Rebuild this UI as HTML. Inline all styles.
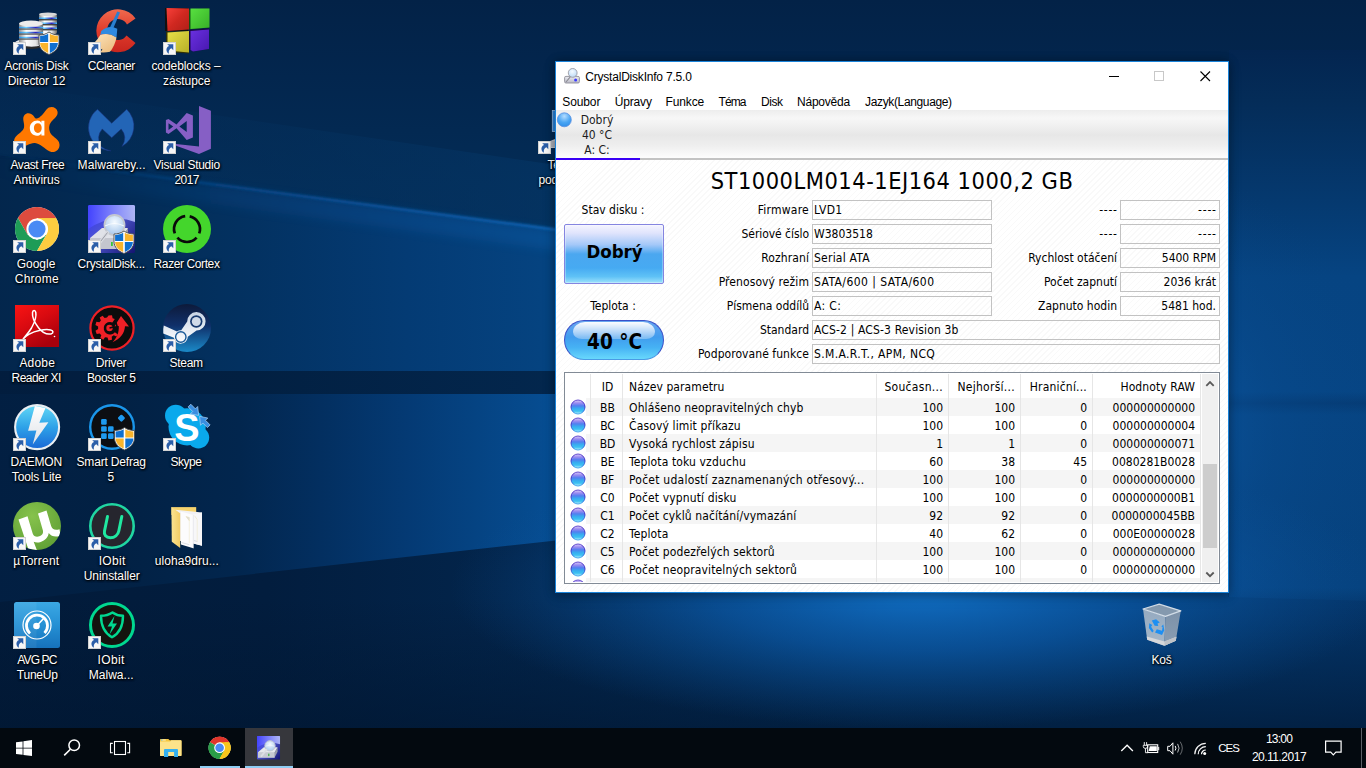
<!DOCTYPE html>
<html lang="cs">
<head>
<meta charset="utf-8">
<title>CrystalDiskInfo 7.5.0</title>
<style>
*{box-sizing:border-box;margin:0;padding:0}
html,body{width:1366px;height:768px;overflow:hidden;background:#03264a}
body{position:relative;font-family:"Liberation Sans",sans-serif;font-size:12px;color:#000}
.abs{position:absolute}
/* ---------- wallpaper ---------- */
#wall{position:absolute;left:0;top:0;width:1366px;height:768px;overflow:hidden;background:#05305f}
#wall svg{position:absolute;left:0;top:0}
/* ---------- desktop icons ---------- */
.ico{position:absolute;width:75px;height:99px}
.ico svg.pic{position:absolute;left:13px;top:6px;width:48px;height:48px;overflow:visible}
.ico .lbl{position:absolute;left:-7px;width:87px;top:58px;text-align:center;color:#fff;font-size:12px;line-height:15px;letter-spacing:-0.2px;
 text-shadow:0 1px 2px rgba(0,0,0,.95),1px 1px 2px rgba(0,0,0,.85),0 0 3px rgba(0,0,0,.6)}
.lb{position:absolute;white-space:nowrap;color:#fff;font-size:12px;line-height:15px;text-shadow:0 1px 2px rgba(0,0,0,.95),1px 1px 2px rgba(0,0,0,.85),0 0 3px rgba(0,0,0,.6)}
.ico .sc{position:absolute;left:13px;top:41px;width:13px;height:13px;background:#f7f7f7;border:1px solid #d2d2d2}
.ico .sc svg{position:absolute;left:0;top:0;width:11px;height:11px}
/* ---------- taskbar ---------- */
#tb{position:absolute;left:0;top:728px;width:1366px;height:40px;background:#03090f}
#tb .t{position:absolute;color:#fff;font-size:12px;letter-spacing:-0.3px;white-space:nowrap}
/* ---------- window ---------- */
#win{position:absolute;left:555px;top:61px;width:674px;height:532px;border:1px solid #1a83d9;background:#fff;box-shadow:0 0 9px rgba(0,0,0,.28),0 3px 12px rgba(0,0,0,.2);overflow:hidden}
#win .ttl{position:absolute;left:29.3px;top:7px;font-size:12px;letter-spacing:-0.21px;white-space:nowrap;line-height:16px}
.menu{position:absolute;top:32px;font-size:12px;letter-spacing:-0.3px;white-space:nowrap;line-height:16px}
#strip{z-index:2;position:absolute;left:0;top:48px;width:672px;height:50px;background:linear-gradient(#ededed 0,#f7f7f7 8px,#f2f2f2 14px,#e7e7e7 25px,#efefef 36px,#fdfdfd 48px,#c3c3c3 48px,#c3c3c3 50px)}
#main{position:absolute;left:0;top:97px;width:672px;height:433px;background:#fff repeating-linear-gradient(135deg,#fff 0,#fff 3.2px,#f9f9f9 3.2px,#f9f9f9 4.2px)}
.dj{font-family:"DejaVu Sans Condensed","DejaVu Sans","Liberation Sans",sans-serif;font-stretch:condensed;font-size:12px;white-space:nowrap;line-height:16px}
.lab{position:absolute;text-align:right}
.box{position:absolute;height:20px;border:1px solid #c2c2c2;padding:1px 2px 0 1px}
.box.r{text-align:right;padding-right:3px}
</style>
</head>
<body>
<div id="wall"><svg width="1366" height="768" viewBox="0 0 1366 768">
<defs>
<linearGradient id="wbase" x1="0" y1="0" x2="0" y2="1">
<stop offset="0" stop-color="#032247"/><stop offset=".1" stop-color="#03264e"/><stop offset=".24" stop-color="#032c56"/><stop offset=".5" stop-color="#04305c"/><stop offset=".72" stop-color="#032a52"/><stop offset=".82" stop-color="#022246"/><stop offset="1" stop-color="#021c3c"/>
</linearGradient>
<radialGradient id="wglow" cx="900" cy="430" r="520" gradientUnits="userSpaceOnUse" gradientTransform="translate(900 430) scale(1 .62) translate(-900 -430)">
<stop offset="0" stop-color="#1a7ad0" stop-opacity=".95"/><stop offset=".5" stop-color="#0f62b2" stop-opacity=".7"/><stop offset=".72" stop-color="#0a4f96" stop-opacity=".3"/><stop offset="1" stop-color="#08427f" stop-opacity="0"/>
</radialGradient>
<linearGradient id="bmA" x1="0" y1="0" x2="1" y2="0"><stop offset="0" stop-color="#03264c"/><stop offset=".22" stop-color="#032b55"/><stop offset=".43" stop-color="#033160"/><stop offset=".72" stop-color="#043b74"/><stop offset=".95" stop-color="#054380"/><stop offset="1" stop-color="#054682"/></linearGradient>
<linearGradient id="bmB" x1="0" y1="0" x2="1" y2="0"><stop offset="0" stop-color="#04305c" stop-opacity=".1"/><stop offset=".4" stop-color="#04305c" stop-opacity=".35"/><stop offset="1" stop-color="#053768" stop-opacity=".6"/></linearGradient>
<linearGradient id="bmC" x1="0" y1="0" x2="1" y2="0"><stop offset="0" stop-color="#021f42"/><stop offset=".22" stop-color="#022144"/><stop offset=".43" stop-color="#02264e"/><stop offset=".57" stop-color="#032f60"/><stop offset=".72" stop-color="#043a74"/><stop offset=".95" stop-color="#064c90"/><stop offset="1" stop-color="#0754a0"/></linearGradient>
<linearGradient id="edge" x1="0" y1="0" x2="1" y2="0"><stop offset="0" stop-color="#05386c" stop-opacity="0"/><stop offset=".4" stop-color="#0a4f96" stop-opacity=".7"/><stop offset="1" stop-color="#1264b4"/></linearGradient>
<linearGradient id="low1" x1="0" y1="0" x2="1" y2="0"><stop offset="0" stop-color="#021b3a"/><stop offset=".2" stop-color="#021d3e"/><stop offset=".42" stop-color="#03274f"/><stop offset=".65" stop-color="#043464"/><stop offset=".9" stop-color="#04386e"/><stop offset="1" stop-color="#04356a"/></linearGradient>
<linearGradient id="lowfade" x1="0" y1="0" x2="0" y2="1"><stop offset="0" stop-color="#011732" stop-opacity="0"/><stop offset="1" stop-color="#011732" stop-opacity=".7"/></linearGradient>
<linearGradient id="rt2" x1="0" y1="0" x2="0" y2="768" gradientUnits="userSpaceOnUse"><stop offset="0" stop-color="#032247"/><stop offset=".065" stop-color="#032550"/><stop offset=".13" stop-color="#042c58"/><stop offset=".26" stop-color="#05396f"/><stop offset=".36" stop-color="#064482"/><stop offset=".51" stop-color="#064584"/><stop offset=".525" stop-color="#053b74"/><stop offset=".54" stop-color="#064482"/><stop offset=".765" stop-color="#06427e"/><stop offset=".79" stop-color="#04376c"/><stop offset="1" stop-color="#032a52"/></linearGradient>
<linearGradient id="bot" x1="0" y1="0" x2="0" y2="1"><stop offset="0" stop-color="#043160"/><stop offset=".35" stop-color="#032b54"/><stop offset="1" stop-color="#02244a"/></linearGradient>
<radialGradient id="g2" cx="920" cy="588" r="470" gradientUnits="userSpaceOnUse" gradientTransform="translate(920 588) scale(1 .3) translate(-920 -588)"><stop offset="0" stop-color="#1274cc" stop-opacity=".95"/><stop offset=".45" stop-color="#0c5eb0" stop-opacity=".65"/><stop offset="1" stop-color="#0a4f96" stop-opacity="0"/></radialGradient>
<linearGradient id="dkb" x1="0" y1="0" x2="1" y2="0"><stop offset="0" stop-color="#021d3e"/><stop offset=".45" stop-color="#022042"/><stop offset="1" stop-color="#03274e"/></linearGradient>
<filter id="bl5" x="-5%" y="-30%" width="110%" height="160%"><feGaussianBlur stdDeviation="5"/></filter>
<filter id="bl1" x="-5%" y="-5%" width="110%" height="110%"><feGaussianBlur stdDeviation=".8"/></filter>
</defs>
<rect width="1366" height="768" fill="url(#wbase)"/>
<rect x="1229" y="50" width="137" height="718" fill="url(#rt2)"/>
<rect x="560" width="806" height="768" fill="url(#wglow)"/>
<!-- faint upper ray -->
<polygon points="-10,82 570,167 570,232 -10,152" fill="url(#bmB)"/>
<!-- main beam -->
<polygon points="-10,154 570,231 570,372 -10,372" fill="url(#bmA)"/>
<polygon points="-10,156 570,233 570,252 -10,175" fill="url(#edge)" opacity=".32" filter="url(#bl5)"/>
<polygon points="-10,153 570,230 570,233 -10,156" fill="url(#edge)" opacity=".9" filter="url(#bl1)"/>
<!-- dark horizon band -->
<rect x="-10" y="371" width="580" height="23" fill="url(#dkb)"/>
<rect x="-10" y="394" width="580" height="210" fill="url(#bmC)"/>
<!-- lower dark wedge -->
<polygon points="-10,603 570,539 1228,539 1228,597 1376,601 1376,780 -10,780" fill="url(#low1)"/>
<rect x="-10" y="600" width="1386" height="130" fill="url(#lowfade)"/>
<!-- bottom under the window -->
<rect x="400" y="450" width="966" height="280" fill="url(#g2)"/>
</svg>
</div>
<div id="icons"><div class="ico" style="left:0px;top:1px"><svg class="pic" viewBox="0 0 48 48"><defs><linearGradient id="acD" x1="0" y1="0" x2="1" y2="0"><stop offset="0" stop-color="#8a8a8a"/><stop offset=".3" stop-color="#fdfdfd"/><stop offset=".7" stop-color="#e4e4e4"/><stop offset="1" stop-color="#6e6e6e"/></linearGradient><linearGradient id="acB" x1="0" y1="0" x2="1" y2="0"><stop offset="0" stop-color="#2a8ae0"/><stop offset=".3" stop-color="#6ad0ff"/><stop offset=".7" stop-color="#2a20c0"/><stop offset="1" stop-color="#48c0f8"/></linearGradient></defs>
<ellipse cx="19" cy="36" rx="17" ry="4.500" fill="#e8eaee"/>
<g><rect x="26" y="7" width="18" height="20" rx="2" fill="url(#acD)"/><ellipse cx="35" cy="7.200" rx="9" ry="1.800" fill="#d8d8d8"/><rect x="26" y="10.500" width="18" height="1.600" fill="url(#acB)"/><rect x="26" y="12.100" width="18" height="1.300" fill="#333"/><rect x="26" y="15.500" width="18" height="1.600" fill="url(#acB)"/><rect x="26" y="17.100" width="18" height="1.300" fill="#333"/><rect x="26" y="20.500" width="18" height="1.600" fill="url(#acB)"/><rect x="26" y="22.100" width="18" height="1.300" fill="#333"/></g>
<g><path d="M6 16.500h24v20q-12 5-24 0z" fill="url(#acD)"/><ellipse cx="18" cy="16.500" rx="12" ry="3" fill="#ececec"/><rect x="6" y="19.800" width="24" height="1.700" fill="url(#acB)"/><rect x="6" y="21.500" width="24" height="1.200" fill="#555"/><rect x="6" y="24.800" width="24" height="1.700" fill="url(#acB)"/><rect x="6" y="26.500" width="24" height="1.200" fill="#555"/><rect x="6" y="29.800" width="24" height="1.700" fill="url(#acB)"/><rect x="6" y="31.500" width="24" height="1.200" fill="#555"/><path d="M8 37.500q10 4.500 22 0v2.500q-12 4-22 0z" fill="#2a2a2a"/></g>
<g transform="translate(26 25) scale(1.0)"><path d="M10 0C7 2.200 3.500 3 0 3v7.500C0 16 4 20 10 22.500 16 20 20 16 20 10.500V3C16.500 3 13 2.200 10 0z" fill="#fff" stroke="#4a4a4a" stroke-width=".9"/><path d="M10 1.300C7.300 3.100 4.200 3.900 1.100 4v6h8.100V1.800z" fill="#1070d0"/><path d="M10.800 1.800V10h8.100V4c-3.100-.1-6-.9-8.100-2.200z" fill="#f9b42c"/><path d="M1.100 10.900c.2 4.600 3.500 8 8.100 10.200V10.900z" fill="#f9b42c"/><path d="M10.800 10.900v10.200c4.600-2.200 7.900-5.600 8.100-10.200z" fill="#1070d0"/></g></svg><div class="sc"><svg viewBox="0 0 11 11"><path d="M9.300 1.200v6L7.400 5.300C5.400 6 4.400 7.800 4.900 10.800 1.600 8.600 1.600 4.200 5.100 2.900L3.200 1.200z" fill="#2b5ea8"/></svg></div></div><div class="lb" style="left:4.5px;top:59px;letter-spacing:-0.23px">Acronis Disk</div><div class="lb" style="left:7.8px;top:74px;letter-spacing:-0.1px">Director 12</div>
<div class="ico" style="left:75px;top:1px"><svg class="pic" viewBox="0 0 48 48"><defs><linearGradient id="ccR" x1="0" y1="0" x2="0" y2="1"><stop offset="0" stop-color="#ef6a4e"/><stop offset=".5" stop-color="#e03b2b"/><stop offset="1" stop-color="#c8261f"/></linearGradient><linearGradient id="ccB" x1="0" y1="0" x2="1" y2="1"><stop offset="0" stop-color="#fde8c2"/><stop offset="1" stop-color="#eab878"/></linearGradient></defs>
<path d="M47.500 11.500A21.500 21.500 0 1 0 47.500 36L38.500 28.500A10.500 10.500 0 1 1 39 17.500z" fill="url(#ccR)"/>
<path d="M29.300 4.500l2.700 1.100-7.200 17-3.200-1.300z" fill="#2a7fd0"/>
<path d="M13.200 24Q21 17.500 29.300 21.800L28.500 30.500Q20.500 25.300 12.300 28z" fill="#2f8ae0"/>
<path d="M12.300 28Q20.500 25.300 28.500 30.500 27 38.500 22 44.800 17 46 12 45.300 14 43.300 14.500 41.800 10.500 44.300 6 43.800 8.500 41.300 9 39.800 5 41.300 .700 40.300 8 35.300 12.300 28z" fill="url(#ccB)"/></svg><div class="sc"><svg viewBox="0 0 11 11"><path d="M9.300 1.200v6L7.400 5.300C5.400 6 4.400 7.800 4.900 10.800 1.600 8.600 1.600 4.200 5.100 2.900L3.200 1.200z" fill="#2b5ea8"/></svg></div></div><div class="lb" style="left:87.7px;top:59px;letter-spacing:-0.46px">CCleaner</div>
<div class="ico" style="left:150px;top:1px"><svg class="pic" viewBox="0 0 48 48"><defs><linearGradient id="cb1" x1="0" y1="0" x2="1" y2="1"><stop offset="0" stop-color="#f8403a"/><stop offset=".5" stop-color="#d02820"/><stop offset="1" stop-color="#b02018"/></linearGradient><linearGradient id="cb2" x1="0" y1="0" x2="1" y2="1"><stop offset="0" stop-color="#58e040"/><stop offset="1" stop-color="#38b028"/></linearGradient><linearGradient id="cb3" x1="0" y1="0" x2="1" y2="1"><stop offset="0" stop-color="#e8e048"/><stop offset="1" stop-color="#b8b028"/></linearGradient><linearGradient id="cb4" x1="0" y1="0" x2="1" y2="1"><stop offset="0" stop-color="#6a30e0"/><stop offset="1" stop-color="#4818b0"/></linearGradient></defs>
<path d="M2 1h23v23H2z" fill="#101010"/><path d="M3.500 1l22.500.5v21L4.500 24z" fill="url(#cb1)"/>
<path d="M26 2.500l20-1v19l-20 2z" fill="#105010"/><path d="M27.500 1.500H46.500V20.500l-19 1.500z" fill="url(#cb2)"/>
<path d="M3 24.500h23v22l-23-1.500z" fill="#303008"/><path d="M4.500 25.500L26 24v21.500l-21.500-2z" fill="url(#cb3)"/>
<path d="M26 23l20-1.500v20.500l-16 2.500-4-2z" fill="#180840"/><path d="M27.500 24L46 22.500V42l-16 2.500-2.500-1.500z" fill="url(#cb4)"/></svg><div class="sc"><svg viewBox="0 0 11 11"><path d="M9.300 1.200v6L7.400 5.300C5.400 6 4.400 7.800 4.900 10.800 1.600 8.600 1.600 4.200 5.100 2.900L3.200 1.200z" fill="#2b5ea8"/></svg></div></div><div class="lb" style="left:151.4px;top:59px;letter-spacing:-0.07px">codeblocks –</div><div class="lb" style="left:163.0px;top:74px;letter-spacing:-0.1px">zástupce</div>
<div class="ico" style="left:0px;top:100px"><svg class="pic" viewBox="0 0 48 48"><path d="M24 12.500C27 12 31 7 33.500 3.500 36.500-.5 43.500.5 44.500 5.500 45.500 10 41 12.500 38.500 15.500 35.500 19 35.500 24 38 28 40.500 31.500 46 33 46.500 38.500 47 44 41.500 47.500 37 45.500 31.500 43 27.500 37.500 22 37 16.500 36.500 12.500 41.500 7 41 1.500 40.500-.5 34.500 2.500 31 5.500 27.500 10 25.500 11 21.500 12 17.500 8.500 12.500 11.500 9 14.500 5.500 19.500 8 21 10.500 22 12 22.500 12.700 24 12.500z" fill="#ff7800"/>
<path d="M24.500 14.500c-4.500 0-7.700 3.200-7.700 7.600 0 4.500 3 7.600 7 7.600 2 0 3.600-.8 4.600-2.300v2h3V14.800h-3v2c-1-1.500-2.300-2.300-3.900-2.300zm.4 2.800c2.300 0 3.800 1.900 3.800 4.800s-1.500 4.800-3.800 4.800c-2.400 0-4-1.900-4-4.800s1.600-4.800 4-4.800z" fill="#fff"/></svg><div class="sc"><svg viewBox="0 0 11 11"><path d="M9.300 1.200v6L7.400 5.300C5.400 6 4.400 7.800 4.900 10.800 1.600 8.600 1.600 4.200 5.100 2.900L3.200 1.200z" fill="#2b5ea8"/></svg></div></div><div class="lb" style="left:10.4px;top:158px;letter-spacing:-0.38px">Avast Free</div><div class="lb" style="left:13.5px;top:173px;letter-spacing:0.04px">Antivirus</div>
<div class="ico" style="left:75px;top:100px"><svg class="pic" viewBox="0 0 48 48"><path d="M9.500 3.300L23.700 17.200 38.700 3.300A23.200 23.200 0 0 1 33.900 40.500Q40 31 33.200 23L23.700 31.700 14.200 23Q7.500 31 13.100 40.500 17 44 23 44.900A23.200 23.200 0 0 1 9.500 3.300z" fill="#2365b6" stroke="#1a2f78" stroke-width=".5"/></svg><div class="sc"><svg viewBox="0 0 11 11"><path d="M9.300 1.200v6L7.400 5.300C5.400 6 4.400 7.800 4.900 10.800 1.600 8.600 1.600 4.200 5.100 2.900L3.200 1.200z" fill="#2b5ea8"/></svg></div></div><div class="lb" style="left:77.6px;top:158px;letter-spacing:0.08px">Malwareby...</div>
<div class="ico" style="left:150px;top:100px"><svg class="pic" viewBox="0 0 48 48"><path d="M36 0L47.900 4.750V42.700L36 48.100 13.100 39.800V37.900L36 40.500z" fill="#865fc5"/>
<path d="M2.900 13.900L5.500 12.900 13.500 18.500 23.700 6.900 29.900 9.500V31.400L23.700 33.900 13.500 22.300 5.500 27.900 2.900 26.600zM5.500 17.200V24.100L10.200 20.400zM23.700 15.100L16.400 20.400 23.700 25.900z" fill="#865fc5" fill-rule="evenodd"/></svg><div class="sc"><svg viewBox="0 0 11 11"><path d="M9.300 1.200v6L7.400 5.300C5.400 6 4.400 7.800 4.900 10.800 1.600 8.600 1.600 4.200 5.100 2.900L3.200 1.200z" fill="#2b5ea8"/></svg></div></div><div class="lb" style="left:153.6px;top:158px;letter-spacing:-0.28px">Visual Studio</div><div class="lb" style="left:174.5px;top:173px;letter-spacing:-0.6px">2017</div>
<div class="ico" style="left:0px;top:199px"><svg class="pic" viewBox="0 0 48 48"><g transform="translate(24 24)"><circle r="22" fill="#fff"/>
<path d="M-19.050 -11A22 22 0 0 1 19.050 -11L0 -11 -9.530 5.500z" fill="#dd4b3e"/>
<path d="M-19.050 -11L-9.530 5.500 0 11 9.530 5.500 0 22A22 22 0 0 1 -19.050 -11z" fill="#1e9c57"/>
<path d="M19.050 -11A22 22 0 0 1 0 22L9.530 5.500A11 11 0 0 0 9.530 -5.500L0 -11z" fill="#fdcd40"/>
<path d="M0 -11H19.050" stroke="#c8402f" stroke-width=".1"/>
<circle r="10.600" fill="#fff"/><circle r="8.600" fill="#4a8af4"/></g></svg><div class="sc"><svg viewBox="0 0 11 11"><path d="M9.300 1.200v6L7.400 5.300C5.400 6 4.400 7.800 4.900 10.800 1.600 8.600 1.600 4.200 5.100 2.900L3.200 1.200z" fill="#2b5ea8"/></svg></div></div><div class="lb" style="left:16.7px;top:257px;letter-spacing:0.0px">Google</div><div class="lb" style="left:14.7px;top:272px;letter-spacing:0.28px">Chrome</div>
<div class="ico" style="left:75px;top:199px"><svg class="pic" viewBox="0 0 48 48"><defs><linearGradient id="cdA" x1="0" y1="0" x2="1" y2="1"><stop offset="0" stop-color="#3030f8"/><stop offset=".45" stop-color="#5058d0"/><stop offset="1" stop-color="#141470"/></linearGradient><linearGradient id="cdT" x1="0" y1="0" x2="1" y2="0"><stop offset="0" stop-color="#4444ff" stop-opacity=".9"/><stop offset="1" stop-color="#c0c8ff" stop-opacity=".85"/></linearGradient><radialGradient id="cdL" cx=".5" cy=".35" r=".65"><stop offset="0" stop-color="#f4faff"/><stop offset="1" stop-color="#a8c8ec"/></radialGradient></defs>
<rect x="0" y="0" width="47" height="48" rx="1.500" fill="url(#cdA)"/>
<path d="M0 1.500Q0 0 1.500 0h44Q47 0 47 1.500V17Q24 8 0 24z" fill="url(#cdT)"/>
<path d="M2 33l12-10h26l-6 11v10H2z" fill="#e0e2e8"/><path d="M2 33h32v11H2z" fill="#c4c6ce"/><path d="M34 33l6-10v9l-6 12z" fill="#9a9ca8"/>
<circle cx="26.500" cy="20" r="10" fill="url(#cdL)" stroke="#c4c8d0" stroke-width="1.800"/><path d="M17 21q9.500-5 19 0" stroke="#fff" stroke-width="1.200" fill="none" opacity=".8"/>
<path d="M19.500 27.500L9 41" stroke="#d8dae0" stroke-width="3.200" stroke-linecap="round"/><path d="M19.500 27.500L9 41" stroke="#9a9ca6" stroke-width="1"/>
<rect x="23" y="37" width="1.800" height="4" fill="#38c838"/><g transform="translate(26 26) scale(1.0)"><path d="M10 0C7 2.200 3.500 3 0 3v7.500C0 16 4 20 10 22.500 16 20 20 16 20 10.500V3C16.500 3 13 2.200 10 0z" fill="#fff" stroke="#4a4a4a" stroke-width=".9"/><path d="M10 1.300C7.300 3.100 4.200 3.900 1.100 4v6h8.100V1.800z" fill="#1070d0"/><path d="M10.800 1.800V10h8.100V4c-3.100-.1-6-.9-8.100-2.200z" fill="#f9b42c"/><path d="M1.100 10.900c.2 4.600 3.500 8 8.100 10.200V10.900z" fill="#f9b42c"/><path d="M10.800 10.900v10.200c4.600-2.200 7.900-5.600 8.100-10.200z" fill="#1070d0"/></g></svg><div class="sc"><svg viewBox="0 0 11 11"><path d="M9.300 1.200v6L7.400 5.300C5.400 6 4.400 7.800 4.900 10.800 1.600 8.600 1.600 4.200 5.100 2.900L3.200 1.200z" fill="#2b5ea8"/></svg></div></div><div class="lb" style="left:77.6px;top:257px;letter-spacing:-0.24px">CrystalDisk...</div>
<div class="ico" style="left:150px;top:199px"><svg class="pic" viewBox="0 0 48 48"><circle cx="24" cy="24" r="24" fill="#44d62c"/>
<g transform="translate(24 24)" fill="none" stroke="#0a0a0a" stroke-width="2.700"><path d="M-1.800 -12.800A12.900 12.900 0 0 0 -12.200 4.400"/><path d="M-9.600 8.700A12.900 12.900 0 0 0 9.600 8.700"/><path d="M12.200 4.400A12.900 12.900 0 0 0 2.700 -12.600"/></g></svg><div class="sc"><svg viewBox="0 0 11 11"><path d="M9.300 1.200v6L7.400 5.300C5.400 6 4.400 7.800 4.900 10.800 1.600 8.600 1.600 4.200 5.100 2.900L3.200 1.200z" fill="#2b5ea8"/></svg></div></div><div class="lb" style="left:153.6px;top:257px;letter-spacing:-0.4px">Razer Cortex</div>
<div class="ico" style="left:0px;top:298px"><svg class="pic" viewBox="0 0 48 48"><defs><linearGradient id="adR" x1="0" y1="0" x2=".6" y2="1"><stop offset="0" stop-color="#fa1414"/><stop offset=".5" stop-color="#d80a10"/><stop offset="1" stop-color="#a8000c"/></linearGradient></defs>
<rect x="2" y="1" width="44" height="42" fill="url(#adR)"/>
<path d="M8 38.500c2-4.500 7-8.500 10.500-14.500 3-5.500 5-12 4.300-15.500-.6-2.700-3-2.500-3.300.2-.4 4 2.500 10.500 6 15 3.500 4.500 8.500 7 12.500 6.200 2.800-.6 2.500-3.300-.3-4-5.500-1.300-15.500.8-21.500 4.300-4 2.400-7 5.800-8.200 8.300z" fill="none" stroke="#fff" stroke-width="1.500" stroke-linejoin="round"/><circle cx="41.500" cy="32.500" r=".8" fill="#fff"/></svg><div class="sc"><svg viewBox="0 0 11 11"><path d="M9.300 1.200v6L7.400 5.300C5.400 6 4.400 7.800 4.900 10.800 1.600 8.600 1.600 4.200 5.100 2.900L3.200 1.200z" fill="#2b5ea8"/></svg></div></div><div class="lb" style="left:19.4px;top:356px;letter-spacing:0.2px">Adobe</div><div class="lb" style="left:11.6px;top:371px;letter-spacing:-0.54px">Reader XI</div>
<div class="ico" style="left:75px;top:298px"><svg class="pic" viewBox="0 0 48 48"><circle cx="24" cy="24" r="21.600" fill="#0c0c0c" stroke="#ee2026" stroke-width="2.200"/>
<g fill="#ee2026"><path d="M20.500 11.500l3.500-.2.600 3 2.200.8-2.400 3.300a6.300 6.300 0 1 0 2.500 9.800l3 2.200-1.600 2.200-2.600-1.300-2 1.500.3 3-3.500.6-1-2.800-2.500-.4-1.700 2.500-3-1.600 1-2.900-1.600-1.800-3 .6-1.200-3.200 2.600-1.700v-2.500l-2.700-1.500 1-3.300 3 .5 1.500-1.900-1.200-2.800 2.900-1.800 2 2.300 2.400-.6z"/><circle cx="21.500" cy="24" r="3.200"/><path d="M21.500 24l6-1.500" stroke="#0c0c0c" stroke-width="1.500"/>
<path d="M33 12l8 10.500-4-.3c-.5 7-4.500 12.500-12.500 16 4.500-4.500 6.500-9.500 6.300-16.200l-4.300.3z"/></g>
<path d="M27 17.500q3 4 1.500 10" stroke="#0c0c0c" stroke-width="1.800" fill="none"/></svg><div class="sc"><svg viewBox="0 0 11 11"><path d="M9.300 1.200v6L7.400 5.300C5.400 6 4.400 7.800 4.900 10.800 1.600 8.600 1.600 4.200 5.100 2.900L3.200 1.200z" fill="#2b5ea8"/></svg></div></div><div class="lb" style="left:95.8px;top:356px;letter-spacing:-0.24px">Driver</div><div class="lb" style="left:86.9px;top:371px;letter-spacing:-0.3px">Booster 5</div>
<div class="ico" style="left:150px;top:298px"><svg class="pic" viewBox="0 0 48 48"><defs><linearGradient id="stG" x1="0" y1="0" x2="0" y2="1"><stop offset="0" stop-color="#0d1a3a"/><stop offset=".45" stop-color="#10306a"/><stop offset="1" stop-color="#1b8ac8"/></linearGradient><linearGradient id="stW" x1="0" y1="0" x2="0" y2="1"><stop offset="0" stop-color="#c8d4e4"/><stop offset="1" stop-color="#fff"/></linearGradient></defs>
<circle cx="24" cy="24" r="24" fill="url(#stG)"/>
<path d="M0.800 21.500L14 27.500a7 7 0 0 1 4.200-1.200l6-8.800a9.200 9.200 0 1 1 9.300 9l-8.700 6.300a7 7 0 0 1-13.900 1L0.300 29.500A24 24 0 0 1 .8 21.500z" fill="url(#stW)"/>
<circle cx="33.300" cy="17.500" r="6.200" fill="#16386e"/><circle cx="33.300" cy="17.500" r="4.500" fill="#d0dae8"/>
<circle cx="17.800" cy="33" r="5.200" fill="none" stroke="#1a5a98" stroke-width="1.400"/><path d="M11 31l7.500 3.200a3.500 3.500 0 0 0 2.700-6.400" fill="none" stroke="#1a5a98" stroke-width="1.200" opacity=".0"/></svg><div class="sc"><svg viewBox="0 0 11 11"><path d="M9.300 1.200v6L7.400 5.300C5.400 6 4.400 7.800 4.900 10.800 1.600 8.600 1.600 4.200 5.100 2.900L3.200 1.200z" fill="#2b5ea8"/></svg></div></div><div class="lb" style="left:169.4px;top:356px;letter-spacing:-0.25px">Steam</div>
<div class="ico" style="left:0px;top:397px"><svg class="pic" viewBox="0 0 48 48"><defs><linearGradient id="dmG" x1="0" y1="0" x2="0" y2="1"><stop offset="0" stop-color="#62d8f6"/><stop offset=".5" stop-color="#2ea2e8"/><stop offset="1" stop-color="#1a68d6"/></linearGradient><linearGradient id="dmW" x1="0" y1="0" x2="0" y2="1"><stop offset="0" stop-color="#ffffff"/><stop offset="1" stop-color="#dfe3e8"/></linearGradient></defs>
<circle cx="24.100" cy="24.100" r="22" fill="url(#dmG)" stroke="#e9eef2" stroke-width="2.100"/>
<path d="M21.900 2.900L32.500 5.100 26.300 19.700 35.400 19.300 19.700 41.600 23.400 27.400 15.100 27.700z" fill="url(#dmW)"/></svg><div class="sc"><svg viewBox="0 0 11 11"><path d="M9.300 1.200v6L7.400 5.300C5.400 6 4.400 7.800 4.900 10.800 1.600 8.600 1.600 4.200 5.100 2.900L3.200 1.200z" fill="#2b5ea8"/></svg></div></div><div class="lb" style="left:10.4px;top:455px;letter-spacing:-0.18px">DAEMON</div><div class="lb" style="left:11.8px;top:470px;letter-spacing:-0.13px">Tools Lite</div>
<div class="ico" style="left:75px;top:397px"><svg class="pic" viewBox="0 0 48 48"><circle cx="24" cy="24" r="21.800" fill="#0c0e12" stroke="#1a96ea" stroke-width="2.400"/>
<g fill="#1e9af0"><rect x="13.100" y="16.100" width="5.600" height="5.600" rx="1.200"/><rect x="13.100" y="23.200" width="5.600" height="5.600" rx="1.200"/><rect x="20" y="23.200" width="5.600" height="5.600" rx="1.200"/><rect x="13.100" y="30.300" width="5.600" height="5.600" rx="1.200"/><rect x="20" y="30.300" width="5.600" height="5.600" rx="1.200"/><rect x="30.600" y="12.400" width="5.600" height="5.600" rx="1.200" transform="rotate(45 33.400 15.200)"/></g><g transform="translate(26.5 24.5) scale(1.0)"><path d="M10 0C7 2.200 3.500 3 0 3v7.500C0 16 4 20 10 22.500 16 20 20 16 20 10.500V3C16.500 3 13 2.200 10 0z" fill="#fff" stroke="#4a4a4a" stroke-width=".9"/><path d="M10 1.300C7.300 3.100 4.200 3.900 1.100 4v6h8.100V1.800z" fill="#1070d0"/><path d="M10.800 1.800V10h8.100V4c-3.100-.1-6-.9-8.100-2.200z" fill="#f9b42c"/><path d="M1.100 10.900c.2 4.600 3.500 8 8.100 10.200V10.900z" fill="#f9b42c"/><path d="M10.800 10.900v10.200c4.600-2.200 7.900-5.600 8.100-10.200z" fill="#1070d0"/></g></svg><div class="sc"><svg viewBox="0 0 11 11"><path d="M9.300 1.200v6L7.400 5.300C5.400 6 4.400 7.800 4.900 10.800 1.600 8.600 1.600 4.200 5.100 2.900L3.200 1.200z" fill="#2b5ea8"/></svg></div></div><div class="lb" style="left:76.5px;top:455px;letter-spacing:-0.17px">Smart Defrag</div><div class="lb" style="left:107.6px;top:470px;letter-spacing:0.0px">5</div>
<div class="ico" style="left:150px;top:397px"><svg class="pic" viewBox="0 0 48 48"><g fill="#0aa9ec"><circle cx="12.800" cy="12.500" r="10.800"/><circle cx="35.400" cy="34.600" r="10.800"/><circle cx="24.100" cy="23.800" r="18.600"/></g>
<text x="24" y="37.500" font-family="Liberation Sans,sans-serif" font-weight="bold" font-size="38" fill="#fff" text-anchor="middle">S</text>
<g fill="#3a8ee0" stroke="#b0d2f4" stroke-width=".7"><path d="M35.600 12.400l-8.200-1.600 2.300-2.300-4.600-4.600 2.700-2.700 4.600 4.600 2.300-2.300z"/><path d="M36.600 13.400l8.200 1.600-2.300 2.300 4.600 4.600-2.700 2.700-4.600-4.600-2.300 2.300z"/></g></svg><div class="sc"><svg viewBox="0 0 11 11"><path d="M9.300 1.200v6L7.400 5.300C5.400 6 4.400 7.800 4.900 10.800 1.600 8.600 1.600 4.200 5.100 2.900L3.200 1.200z" fill="#2b5ea8"/></svg></div></div><div class="lb" style="left:170.4px;top:455px;letter-spacing:-0.43px">Skype</div>
<div class="ico" style="left:0px;top:496px"><svg class="pic" viewBox="0 0 48 48"><defs><radialGradient id="utG" cx=".4" cy=".3" r=".8"><stop offset="0" stop-color="#86c24c"/><stop offset="1" stop-color="#5e9e34"/></radialGradient></defs>
<clipPath id="utC"><circle cx="24" cy="24" r="24"/></clipPath><circle cx="24" cy="24" r="24" fill="url(#utG)"/>
<path clip-path="url(#utC)" d="M5.500 17.500l9-3.200 5.200 17.200c1 3 3.800 3.800 6.700 2.800 3.200-1.100 4.300-3.500 3.300-6.500L25 11.500l8.500-3 4.600 15.500c1 3.200 3.600 4.600 8.400 3.200l1 6.500c-5 1.800-9.200.7-11.800-2.700-.5 4.200-3.500 7.500-8 9-2.500.8-5 .8-7-.2l3.200 8.400-8.700-1.500z" fill="#fff"/></svg><div class="sc"><svg viewBox="0 0 11 11"><path d="M9.300 1.200v6L7.400 5.300C5.400 6 4.400 7.800 4.900 10.800 1.600 8.600 1.600 4.200 5.100 2.900L3.200 1.200z" fill="#2b5ea8"/></svg></div></div><div class="lb" style="left:13.3px;top:554px;letter-spacing:0.23px">µTorrent</div>
<div class="ico" style="left:75px;top:496px"><svg class="pic" viewBox="0 0 48 48"><circle cx="24" cy="24" r="21.700" fill="#26262e" stroke="#20d6a2" stroke-width="2.600"/>
<path d="M19.500 14.500l-3 14.500c-.8 4 1.500 6.700 5.800 6.700 4.400 0 7.700-2.700 8.500-6.700l3-14.500" fill="none" stroke="#20e8a0" stroke-width="3" stroke-linecap="round"/></svg><div class="sc"><svg viewBox="0 0 11 11"><path d="M9.300 1.200v6L7.400 5.300C5.400 6 4.400 7.800 4.900 10.800 1.600 8.600 1.600 4.200 5.100 2.900L3.200 1.200z" fill="#2b5ea8"/></svg></div></div><div class="lb" style="left:98.7px;top:554px;letter-spacing:0.3px">IObit</div><div class="lb" style="left:83.7px;top:569px;letter-spacing:-0.06px">Uninstaller</div>
<div class="ico" style="left:150px;top:496px"><svg class="pic" viewBox="0 0 48 48"><defs><linearGradient id="fdG" x1="0" y1="0" x2="1" y2="0"><stop offset="0" stop-color="#fbe391"/><stop offset="1" stop-color="#f2cc64"/></linearGradient></defs>
<path d="M8.400 5.100H33.200V13H8.400z" fill="#f6d36e"/>
<path d="M12.400 7.700L39 10.600V43.800L30.300 41.500 12.400 38z" fill="#f1f1f4"/>
<path d="M30.300 12.500L39 10.600V43.800L30.300 41.500z" fill="#f7f7f9"/>
<path d="M17.900 9.500L30.300 13V46.300L17.900 42.500z" fill="#fcfcfd"/>
<path d="M30.300 13V46.300" stroke="#e3e3e8" stroke-width=".7"/>
<path d="M23 14.500l3.300 4.300v-3.300zM31.500 13.700l2.700 3.800" fill="#dcdce2" stroke="#e8dca8" stroke-width=".5"/>
<path d="M26.300 18.800V41M34.200 17.500V40" stroke="#ece4c0" stroke-width=".6" opacity=".8"/>
<path d="M18.500 40.500l7.800 2.200M31 38.500l3.200 1" stroke="#c8ccd4" stroke-width=".6"/>
<path d="M8.400 5.100L17.200 11.300V46L8.800 39.800z" fill="url(#fdG)"/></svg></div><div class="lb" style="left:154.8px;top:554px;letter-spacing:0.06px">uloha9dru...</div>
<div class="ico" style="left:0px;top:595px"><svg class="pic" viewBox="0 0 48 48"><defs><linearGradient id="avG" x1="0" y1="0" x2="0" y2="1"><stop offset="0" stop-color="#3ba8e4"/><stop offset=".5" stop-color="#2590d4"/><stop offset="1" stop-color="#1672bc"/></linearGradient></defs>
<rect x="1" y="1" width="46" height="46" rx="2.500" fill="url(#avG)"/><path d="M1 3.500Q1 1 3.500 1h20v46h-20Q1 47 1 44.500z" fill="#fff" opacity=".06"/>
<g transform="translate(0 -1)"><circle cx="24" cy="25" r="14" fill="none" stroke="#fff" stroke-width="1.200"/>
<path d="M17 33.500A10.500 10.500 0 1 1 31.500 33" fill="none" stroke="#fff" stroke-width="2.800"/>
<circle cx="23.500" cy="26" r="3.300" fill="#fff"/><path d="M24.500 25l7-7.500" stroke="#fff" stroke-width="1.600" stroke-linecap="round"/></g></svg><div class="sc"><svg viewBox="0 0 11 11"><path d="M9.300 1.200v6L7.400 5.300C5.400 6 4.400 7.800 4.900 10.800 1.600 8.600 1.600 4.200 5.100 2.900L3.200 1.200z" fill="#2b5ea8"/></svg></div></div><div class="lb" style="left:17.3px;top:653px;letter-spacing:-0.88px">AVG PC</div><div class="lb" style="left:16.8px;top:668px;letter-spacing:-0.24px">TuneUp</div>
<div class="ico" style="left:75px;top:595px"><svg class="pic" viewBox="0 0 48 48"><circle cx="24" cy="24" r="21.500" fill="#14130e" stroke="#00d890" stroke-width="3"/>
<path d="M24.500 11.500c3.500 2.500 7 3.300 10.500 3.300 0 9.500-2.500 17-11 21.500-8-4.500-11-12-11-21.500 4 0 8-1 11.500-3.300z" fill="none" stroke="#00d890" stroke-width="2.400" stroke-linejoin="round"/>
<path d="M26.500 15l-7 10.500h4.500l-2.500 8 7.500-11h-4.500z" fill="#00d890"/></svg><div class="sc"><svg viewBox="0 0 11 11"><path d="M9.300 1.200v6L7.400 5.300C5.400 6 4.400 7.800 4.900 10.800 1.600 8.600 1.600 4.200 5.100 2.900L3.200 1.200z" fill="#2b5ea8"/></svg></div></div><div class="lb" style="left:97.5px;top:653px;letter-spacing:0.4px">IObit</div><div class="lb" style="left:88.7px;top:668px;letter-spacing:0.04px">Malwa...</div>
<div class="ico" style="left:525px;top:100px"><svg class="pic" viewBox="0 0 48 48"><rect x="14.300" y="4.500" width="30" height="21" fill="#2f86dc" stroke="#9cc0e8" stroke-width=".8"/><path d="M11 35.500l6-2.500h20v9H11z" fill="#c2c6ce"/><path d="M12.500 36h8M12.500 38h8M12.500 40h8" stroke="#8a8e98" stroke-width=".7"/></svg><div class="sc"><svg viewBox="0 0 11 11"><path d="M9.300 1.200v6L7.400 5.300C5.400 6 4.400 7.800 4.900 10.800 1.600 8.600 1.600 4.200 5.100 2.900L3.200 1.200z" fill="#2b5ea8"/></svg></div></div><div class="lb" style="left:547.500px;top:158px;letter-spacing:-.2px">Tech</div><div class="lb" style="left:538.500px;top:173px;letter-spacing:-.2px">podpora</div>
<div class="ico" style="left:1124px;top:595px"><svg class="pic" viewBox="0 0 48 48"><g transform="translate(0 -1)"><defs><linearGradient id="rbL" x1="0" y1="0" x2="0" y2="1"><stop offset="0" stop-color="#9fb1c4"/><stop offset="1" stop-color="#b2c0ce"/></linearGradient><linearGradient id="rbR" x1="0" y1="0" x2="0" y2="1"><stop offset="0" stop-color="#8597ab"/><stop offset="1" stop-color="#95a5b7"/></linearGradient></defs>
<path d="M6 9L28.400 16.400 27.400 45.800 10.200 39.800z" fill="url(#rbL)" opacity=".93"/>
<path d="M28.400 16.400L43.800 10.800 38.800 40.800 27.400 45.800z" fill="url(#rbR)" opacity=".93"/>
<path d="M9.700 36.500L27.600 41.500 39.400 36.800 38.800 40.800 27.400 45.800 10.200 39.800z" fill="#d6d8db"/>
<path d="M27.600 41.500L39.400 36.800 38.800 40.800 27.400 45.800z" fill="#bfc3c8"/>
<path d="M6 9L22.200 4.200 43.800 10.800 28.400 16.400z" fill="#8499ae" stroke="#d3dde7" stroke-width="1.300" stroke-linejoin="round"/>
<g fill="#1e8ff2"><path d="M14.800 20.500l4.300-1.300 3.700 3.300-2.300 1 .8 2.600-3.600-.4z"/><path d="M12.300 23.300l3 1.700-1.200 1.700 2.600 4.300-1.500 1.500-3.300-4.600z"/><path d="M18 32.500l1.800-3.300 5.200 1.500.6-3.800-1.300-.3 2-2.200 1 5.800-2.300 4.900z"/></g></g></svg></div><div class="lb" style="left:1151.4px;top:653px;letter-spacing:-0.15px">Koš</div></div>
<div id="win"><svg class="abs" style="left:8px;top:6px" width="16" height="16" viewBox="0 0 16 16">
<defs><linearGradient id="tiB" x1="0" y1="0" x2="0" y2="1"><stop offset="0" stop-color="#ececf2"/><stop offset="1" stop-color="#b9b9c6"/></linearGradient>
<radialGradient id="tiL" cx=".45" cy=".35" r=".7"><stop offset="0" stop-color="#f4faff"/><stop offset="1" stop-color="#b8d8f6"/></radialGradient></defs>
<rect x=".6" y="8.4" width="14.8" height="6.6" rx="1.3" fill="url(#tiB)" stroke="#8e8e98" stroke-width=".9"/>
<path d="M2 14 L6.3 8.8" stroke="#8a8a92" stroke-width="1.1"/>
<circle cx="8.700" cy="4.900" r="4.400" fill="url(#tiL)" stroke="#9a9aa4" stroke-width=".9"/>
<circle cx="11.6" cy="12" r="1.5" fill="#3b3bff"/>
</svg>
<div class="ttl">CrystalDiskInfo 7.5.0</div>
<svg class="abs" style="left:534px;top:0" width="138" height="30" viewBox="0 0 138 30">
<path d="M19 14.500h10" stroke="#000" stroke-width="1"/>
<rect x="64.5" y="9.5" width="9" height="9" fill="none" stroke="#c8c8c8" stroke-width="1"/>
<path d="M110.5 9.5l9.5 9.5M120 9.5l-9.5 9.5" stroke="#000" stroke-width="1.1"/>
</svg>
<div class="menu" style="left:6.3px;letter-spacing:-0.12px">Soubor</div>
<div class="menu" style="left:58.7px;letter-spacing:-0.16px">Úpravy</div>
<div class="menu" style="left:109.5px;letter-spacing:-0.12px">Funkce</div>
<div class="menu" style="left:162.5px;letter-spacing:-0.9px">Téma</div>
<div class="menu" style="left:204.9px;letter-spacing:-0.37px">Disk</div>
<div class="menu" style="left:241.0px;letter-spacing:-0.23px">Nápověda</div>
<div class="menu" style="left:309.1px;letter-spacing:-0.36px">Jazyk(Language)</div>
<div id="strip"><div class="abs" style="left:0;top:48px;width:84px;height:2px;background:#3a00f5"></div>
<svg class="abs" style="left:0;top:1px" width="17" height="17" viewBox="0 0 17 17"><defs><radialGradient id="sb" cx=".5" cy=".25" r=".8"><stop offset="0" stop-color="#b4dcff"/><stop offset=".55" stop-color="#4aa6f4"/><stop offset="1" stop-color="#2a8ce8"/></radialGradient></defs><circle cx="8.3" cy="8.8" r="7" fill="url(#sb)" stroke="#5b8fe0" stroke-width=".8"/></svg>
<div class="dj abs" style="left:11px;top:3px;width:60px;text-align:center;line-height:15px;color:#1c1c1c">Dobrý<br>40 °C<br>A: C:</div></div>
<div id="main"><div class="dj abs" style="left:0;top:6px;width:672px;text-align:center;font-size:23.4px;letter-spacing:.52px;line-height:32px">ST1000LM014-1EJ164 1000,2 GB</div>
<div class="dj abs" style="left:7px;top:43px;width:100px;text-align:center">Stav disku :</div>
<div class="abs" style="left:8px;top:65px;width:100px;height:60px;border:1px solid #8585e0;border-radius:2px;background:linear-gradient(#f4f4ff 0,#e0e4fc 14%,#a4c8f8 34%,#4ba7f0 50%,#46aaf2 74%,#5fc2f6 89%,#9ee2fc 100%);box-shadow:inset 0 0 0 1px rgba(255,255,255,.3)"></div>
<div class="dj abs" style="left:9px;top:81px;width:99px;text-align:center;font-weight:bold;font-size:18.5px;line-height:24px">Dobrý</div>
<div class="dj abs" style="left:7px;top:139px;width:100px;text-align:center">Teplota :</div>
<div class="abs" style="left:8px;top:161px;width:100px;height:40px;border:1px solid #3a50c8;border-bottom-color:#4a9ae6;border-radius:20px;background:linear-gradient(#6aa6f0 0,#419cee 42%,#46b2f4 70%,#68d8fc 100%);overflow:hidden"><div class="abs" style="left:8px;top:1px;width:82px;height:17px;border-radius:12px 12px 9px 9px/10px 10px 7px 7px;background:linear-gradient(rgba(255,255,255,.97),rgba(255,255,255,.3))"></div></div>
<div class="dj abs" style="left:9px;top:170px;width:99px;text-align:center;font-weight:bold;font-size:20.5px;line-height:26px">40 °C</div>
<div class="dj lab" style="left:101px;top:43px;width:152px;letter-spacing:0.25px">Firmware</div><div class="dj box" style="left:256px;top:41px;width:180px;letter-spacing:0.3px">LVD1</div>
<div class="dj lab" style="left:101px;top:67px;width:152px;letter-spacing:-0.05px">Sériové číslo</div><div class="dj box" style="left:256px;top:65px;width:180px;letter-spacing:0px">W3803518</div>
<div class="dj lab" style="left:101px;top:91px;width:152px;letter-spacing:0.1px">Rozhraní</div><div class="dj box" style="left:256px;top:89px;width:180px;letter-spacing:0.23px">Serial ATA</div>
<div class="dj lab" style="left:101px;top:115px;width:152px;letter-spacing:0.09px">Přenosový režim</div><div class="dj box" style="left:256px;top:113px;width:180px;letter-spacing:0.44px">SATA/600 | SATA/600</div>
<div class="dj lab" style="left:101px;top:139px;width:152px;letter-spacing:0px">Písmena oddílů</div><div class="dj box" style="left:256px;top:137px;width:180px;letter-spacing:0.36px">A: C:</div>
<div class="dj lab" style="left:101px;top:163px;width:152px;letter-spacing:0px">Standard</div><div class="dj box" style="left:256px;top:161px;width:408px;letter-spacing:0.15px">ACS-2 | ACS-3 Revision 3b</div>
<div class="dj lab" style="left:101px;top:187px;width:152px;letter-spacing:0.06px">Podporované funkce</div><div class="dj box" style="left:256px;top:185px;width:408px;letter-spacing:0.37px">S.M.A.R.T., APM, NCQ</div>
<div class="dj lab" style="left:411px;top:43px;width:150.75px;letter-spacing:.75px;">----</div><div class="dj box r" style="left:564px;top:41px;width:100px;letter-spacing:.75px;padding-right:2.300px;">----</div>
<div class="dj lab" style="left:411px;top:67px;width:150.75px;letter-spacing:.75px;">----</div><div class="dj box r" style="left:564px;top:65px;width:100px;letter-spacing:.75px;padding-right:2.300px;">----</div>
<div class="dj lab" style="left:411px;top:91px;width:150px;">Rychlost otáčení</div><div class="dj box r" style="left:564px;top:89px;width:100px;">5400 RPM</div>
<div class="dj lab" style="left:411px;top:115px;width:150px;">Počet zapnutí</div><div class="dj box r" style="left:564px;top:113px;width:100px;">2036 krát</div>
<div class="dj lab" style="left:411px;top:139px;width:150px;">Zapnuto hodin</div><div class="dj box r" style="left:564px;top:137px;width:100px;">5481 hod.</div>
<svg width="0" height="0" style="position:absolute"><defs><linearGradient id="ballg" x1="0" y1="0" x2="0" y2="1"><stop offset="0" stop-color="#dccff8"/><stop offset=".22" stop-color="#9a8af0"/><stop offset=".42" stop-color="#5080f0"/><stop offset=".6" stop-color="#38aaf0"/><stop offset=".8" stop-color="#3cc2f2"/><stop offset="1" stop-color="#b4eefb"/></linearGradient>
<linearGradient id="balls" x1="0" y1="0" x2="0" y2="1"><stop offset="0" stop-color="#6a50d0"/><stop offset=".4" stop-color="#3a2cc4"/><stop offset=".75" stop-color="#3a6ae0"/><stop offset="1" stop-color="#48b0f0"/></linearGradient>
<g id="ball"><circle cx="8" cy="8" r="7" fill="url(#ballg)" stroke="url(#balls)" stroke-width="1"/></g></defs></svg>
<div class="abs" style="left:8px;top:213px;width:656px;height:212px;border:1px solid #828b96;background:#fff;overflow:hidden"><div class="abs" style="left:21px;top:25px;width:614px;height:18px;background:#f5f5f5"></div>
<div class="abs" style="left:21px;top:61px;width:614px;height:18px;background:#f5f5f5"></div>
<div class="abs" style="left:21px;top:97px;width:614px;height:18px;background:#f5f5f5"></div>
<div class="abs" style="left:21px;top:133px;width:614px;height:18px;background:#f5f5f5"></div>
<div class="abs" style="left:21px;top:169px;width:614px;height:18px;background:#f5f5f5"></div>
<div class="abs" style="left:21px;top:205px;width:614px;height:6px;background:#f5f5f5"></div>
<div class="abs" style="left:25px;top:1px;width:1px;height:208px;background:#e6e6e6"></div>
<div class="abs" style="left:57px;top:1px;width:1px;height:208px;background:#e6e6e6"></div>
<div class="abs" style="left:311px;top:1px;width:1px;height:208px;background:#e6e6e6"></div>
<div class="abs" style="left:383px;top:1px;width:1px;height:208px;background:#e6e6e6"></div>
<div class="abs" style="left:455px;top:1px;width:1px;height:208px;background:#e6e6e6"></div>
<div class="abs" style="left:527px;top:1px;width:1px;height:208px;background:#e6e6e6"></div>
<div class="abs" style="left:635px;top:1px;width:1px;height:208px;background:#e6e6e6"></div>
<div class="dj abs" style="left:27px;top:6px;width:31px;text-align:center;">ID</div>
<div class="dj abs" style="left:64px;top:6px;width:240px;text-align:left;letter-spacing:.1px">Název parametru</div>
<div class="dj abs" style="left:313px;top:6px;width:65px;text-align:right;letter-spacing:.3px">Současn...</div>
<div class="dj abs" style="left:385px;top:6px;width:65px;text-align:right;letter-spacing:.28px">Nejhorší...</div>
<div class="dj abs" style="left:457px;top:6px;width:65px;text-align:right;letter-spacing:.2px">Hraniční...</div>
<div class="dj abs" style="left:529px;top:6px;width:101px;text-align:right;letter-spacing:.1px">Hodnoty RAW</div>
<svg class="abs" style="left:5px;top:26px" width="16" height="16" viewBox="0 0 16 16"><use href="#ball"/></svg>
<div class="dj abs" style="left:27px;top:27px;width:31px;text-align:center;">BB</div>
<div class="dj abs" style="left:64px;top:27px;width:250px;text-align:left;letter-spacing:0.13px">Ohlášeno neopravitelných chyb</div>
<div class="dj abs" style="left:313px;top:27px;width:65px;text-align:right;">100</div>
<div class="dj abs" style="left:385px;top:27px;width:65px;text-align:right;">100</div>
<div class="dj abs" style="left:457px;top:27px;width:65px;text-align:right;">0</div>
<div class="dj abs" style="left:529px;top:27px;width:101px;text-align:right;">000000000000</div>
<svg class="abs" style="left:5px;top:44px" width="16" height="16" viewBox="0 0 16 16"><use href="#ball"/></svg>
<div class="dj abs" style="left:27px;top:45px;width:31px;text-align:center;">BC</div>
<div class="dj abs" style="left:64px;top:45px;width:250px;text-align:left;letter-spacing:0.13px">Časový limit příkazu</div>
<div class="dj abs" style="left:313px;top:45px;width:65px;text-align:right;">100</div>
<div class="dj abs" style="left:385px;top:45px;width:65px;text-align:right;">100</div>
<div class="dj abs" style="left:457px;top:45px;width:65px;text-align:right;">0</div>
<div class="dj abs" style="left:529px;top:45px;width:101px;text-align:right;">000000000004</div>
<svg class="abs" style="left:5px;top:62px" width="16" height="16" viewBox="0 0 16 16"><use href="#ball"/></svg>
<div class="dj abs" style="left:27px;top:63px;width:31px;text-align:center;">BD</div>
<div class="dj abs" style="left:64px;top:63px;width:250px;text-align:left;letter-spacing:0.13px">Vysoká rychlost zápisu</div>
<div class="dj abs" style="left:313px;top:63px;width:65px;text-align:right;">1</div>
<div class="dj abs" style="left:385px;top:63px;width:65px;text-align:right;">1</div>
<div class="dj abs" style="left:457px;top:63px;width:65px;text-align:right;">0</div>
<div class="dj abs" style="left:529px;top:63px;width:101px;text-align:right;">000000000071</div>
<svg class="abs" style="left:5px;top:80px" width="16" height="16" viewBox="0 0 16 16"><use href="#ball"/></svg>
<div class="dj abs" style="left:27px;top:81px;width:31px;text-align:center;">BE</div>
<div class="dj abs" style="left:64px;top:81px;width:250px;text-align:left;letter-spacing:0.13px">Teplota toku vzduchu</div>
<div class="dj abs" style="left:313px;top:81px;width:65px;text-align:right;">60</div>
<div class="dj abs" style="left:385px;top:81px;width:65px;text-align:right;">38</div>
<div class="dj abs" style="left:457px;top:81px;width:65px;text-align:right;">45</div>
<div class="dj abs" style="left:529px;top:81px;width:101px;text-align:right;">0080281B0028</div>
<svg class="abs" style="left:5px;top:98px" width="16" height="16" viewBox="0 0 16 16"><use href="#ball"/></svg>
<div class="dj abs" style="left:27px;top:99px;width:31px;text-align:center;">BF</div>
<div class="dj abs" style="left:64px;top:99px;width:250px;text-align:left;letter-spacing:0.24px">Počet udalostí zaznamenaných otřesový...</div>
<div class="dj abs" style="left:313px;top:99px;width:65px;text-align:right;">100</div>
<div class="dj abs" style="left:385px;top:99px;width:65px;text-align:right;">100</div>
<div class="dj abs" style="left:457px;top:99px;width:65px;text-align:right;">0</div>
<div class="dj abs" style="left:529px;top:99px;width:101px;text-align:right;">000000000000</div>
<svg class="abs" style="left:5px;top:116px" width="16" height="16" viewBox="0 0 16 16"><use href="#ball"/></svg>
<div class="dj abs" style="left:27px;top:117px;width:31px;text-align:center;">C0</div>
<div class="dj abs" style="left:64px;top:117px;width:250px;text-align:left;letter-spacing:0.13px">Počet vypnutí disku</div>
<div class="dj abs" style="left:313px;top:117px;width:65px;text-align:right;">100</div>
<div class="dj abs" style="left:385px;top:117px;width:65px;text-align:right;">100</div>
<div class="dj abs" style="left:457px;top:117px;width:65px;text-align:right;">0</div>
<div class="dj abs" style="left:529px;top:117px;width:101px;text-align:right;">0000000000B1</div>
<svg class="abs" style="left:5px;top:134px" width="16" height="16" viewBox="0 0 16 16"><use href="#ball"/></svg>
<div class="dj abs" style="left:27px;top:135px;width:31px;text-align:center;">C1</div>
<div class="dj abs" style="left:64px;top:135px;width:250px;text-align:left;letter-spacing:0.13px">Počet cyklů načítání/vymazání</div>
<div class="dj abs" style="left:313px;top:135px;width:65px;text-align:right;">92</div>
<div class="dj abs" style="left:385px;top:135px;width:65px;text-align:right;">92</div>
<div class="dj abs" style="left:457px;top:135px;width:65px;text-align:right;">0</div>
<div class="dj abs" style="left:529px;top:135px;width:101px;text-align:right;">0000000045BB</div>
<svg class="abs" style="left:5px;top:152px" width="16" height="16" viewBox="0 0 16 16"><use href="#ball"/></svg>
<div class="dj abs" style="left:27px;top:153px;width:31px;text-align:center;">C2</div>
<div class="dj abs" style="left:64px;top:153px;width:250px;text-align:left;letter-spacing:0.13px">Teplota</div>
<div class="dj abs" style="left:313px;top:153px;width:65px;text-align:right;">40</div>
<div class="dj abs" style="left:385px;top:153px;width:65px;text-align:right;">62</div>
<div class="dj abs" style="left:457px;top:153px;width:65px;text-align:right;">0</div>
<div class="dj abs" style="left:529px;top:153px;width:101px;text-align:right;">000E00000028</div>
<svg class="abs" style="left:5px;top:170px" width="16" height="16" viewBox="0 0 16 16"><use href="#ball"/></svg>
<div class="dj abs" style="left:27px;top:171px;width:31px;text-align:center;">C5</div>
<div class="dj abs" style="left:64px;top:171px;width:250px;text-align:left;letter-spacing:0.13px">Počet podezřelých sektorů</div>
<div class="dj abs" style="left:313px;top:171px;width:65px;text-align:right;">100</div>
<div class="dj abs" style="left:385px;top:171px;width:65px;text-align:right;">100</div>
<div class="dj abs" style="left:457px;top:171px;width:65px;text-align:right;">0</div>
<div class="dj abs" style="left:529px;top:171px;width:101px;text-align:right;">000000000000</div>
<svg class="abs" style="left:5px;top:188px" width="16" height="16" viewBox="0 0 16 16"><use href="#ball"/></svg>
<div class="dj abs" style="left:27px;top:189px;width:31px;text-align:center;">C6</div>
<div class="dj abs" style="left:64px;top:189px;width:250px;text-align:left;letter-spacing:0.13px">Počet neopravitelných sektorů</div>
<div class="dj abs" style="left:313px;top:189px;width:65px;text-align:right;">100</div>
<div class="dj abs" style="left:385px;top:189px;width:65px;text-align:right;">100</div>
<div class="dj abs" style="left:457px;top:189px;width:65px;text-align:right;">0</div>
<div class="dj abs" style="left:529px;top:189px;width:101px;text-align:right;">000000000000</div>
<svg class="abs" style="left:5px;top:206px" width="16" height="16" viewBox="0 0 16 16"><use href="#ball"/></svg>
<div class="abs" style="left:636px;top:0;width:18px;height:210px;background:#fff"></div>
<div class="abs" style="left:637px;top:1px;width:16px;height:208px;background:#f0f0f0"></div>
<div class="abs" style="left:638px;top:91px;width:14px;height:84px;background:#cdcdcd"></div>
<svg class="abs" style="left:637px;top:0" width="16" height="210" viewBox="0 0 16 210"><path d="M4.300 12.800l3.700-3.700 3.700 3.700M4.300 199.500l3.700 3.700 3.700-3.700" fill="none" stroke="#5a5a5a" stroke-width="1.800"/></svg>
<div class="abs" style="left:0;top:209px;width:654px;height:1px;background:#fff"></div></div></div></div>
<div id="tb"><!-- active app button -->
<div class="abs" style="left:245px;top:0;width:48px;height:40px;background:#36373c"></div>
<div class="abs" style="left:245px;top:38px;width:48px;height:2px;background:#8fcdf3"></div>
<div class="abs" style="left:200px;top:38px;width:40px;height:2px;background:#8fcdf3"></div>
<svg class="abs" style="left:0;top:0" width="300" height="40" viewBox="0 0 300 40">
<defs>
<linearGradient id="tcdi" x1="0" y1="0" x2="1" y2="1"><stop offset="0" stop-color="#2a2af0"/><stop offset=".5" stop-color="#3c46c8"/><stop offset="1" stop-color="#1c1c8c"/></linearGradient>
<radialGradient id="tlens" cx=".45" cy=".4" r=".6"><stop offset="0" stop-color="#e8f4ff"/><stop offset="1" stop-color="#9cc4ec"/></radialGradient>
</defs>
<!-- start -->
<path d="M16 14.3l6.6-.9v6.3H16zM23.4 13.3l8.6-1.2v7.6h-8.6zM16 20.5h6.6v6.3l-6.6-.9zM23.4 20.5H32v7.6l-8.6-1.2z" fill="#fff"/>
<!-- search -->
<circle cx="74.2" cy="17.3" r="5.3" fill="none" stroke="#fff" stroke-width="1.5"/><path d="M70.4 21.2l-6.2 6.2" stroke="#fff" stroke-width="1.6"/>
<!-- task view -->
<rect x="114.5" y="13.5" width="11" height="13" fill="none" stroke="#fff" stroke-width="1.1"/>
<path d="M112.800 15.400h-2.300v9.400h2.300M127.300 15.400h2.300v9.400h-2.300" fill="none" stroke="#fff" stroke-width="1.100"/>
<!-- explorer -->
<path d="M160 11.600q0-.7.700-.7h7.600l1.500 1.400h11q.7 0 .7.700v14.300q0 .7-.7.700h-20.100q-.7 0-.7-.7z" fill="#f5c63f"/>
<path d="M160 13.400h10.200l1-1.100h9.600q.7 0 .7.700v14.300q0 .7-.7.700h-20.100q-.7 0-.7-.7z" fill="#fce38a"/>
<rect x="161.200" y="11.500" width="4.600" height="1" fill="#fdf2c4"/><rect x="161.200" y="11.500" width="1.200" height="1" fill="#3fb0e8"/>
<path d="M164 22q0-1 1-1h12q1 0 1 1v7h-3.900v-4.900h-5.900v4.900H164z" fill="#35b0ef"/>
<!-- chrome -->
<g transform="translate(219.6 19.7)">
<circle r="11" fill="#fff"/>
<path d="M0 0L-9.53 -5.5A11 11 0 0 1 9.53 -5.5z" fill="#e0352b"/>
<path d="M-9.53 -5.5A11 11 0 0 1 9.53 -5.5L0 -5.5z" fill="#e0352b"/>
<path d="M-9.53 -5.5A11 11 0 0 0 0 11L4.76 2.75L0 0z" fill="#2a9d48"/>
<path d="M-9.53 -5.5L-4.76 2.75L4.76 2.75L0 11A11 11 0 0 1 -9.53 -5.5z" fill="#2a9d48"/>
<path d="M9.53 -5.5A11 11 0 0 1 0 11L4.76 2.75A5.5 5.5 0 0 0 4.76 -5.5z" fill="#f8c61c"/>
<path d="M0 -5.5H9.53A11 11 0 0 1 0 11L4.76 2.75z" fill="#f8c61c"/>
<circle r="5.4" fill="#fff"/><circle r="4.3" fill="#4a8af4"/>
</g>
<!-- crystaldiskinfo -->
<g transform="translate(257 8) scale(.49)">
<rect x="0" y="0" width="47" height="48" rx="1.500" fill="url(#cdA)"/>
<path d="M0 1.500Q0 0 1.500 0h44Q47 0 47 1.500V17Q24 8 0 24z" fill="url(#cdT)"/>
<path d="M2 33l12-10h28l-6 11v10H2z" fill="#e6e8ec"/><path d="M2 33h34v11H2z" fill="#c8cad2"/><path d="M36 33l6-10v9l-6 12z" fill="#9a9ca8"/>
<circle cx="26.500" cy="20" r="10.500" fill="url(#cdL)" stroke="#c4c8d0" stroke-width="2"/><path d="M17 21q9.500-5 19 0" stroke="#fff" stroke-width="1.400" fill="none" opacity=".8"/>
<path d="M19.500 28L9 41" stroke="#dcdee4" stroke-width="3.600" stroke-linecap="round"/>
<rect x="23" y="36" width="2.200" height="5" fill="#2eae2e"/>
</g>
</svg>
<!-- tray -->
<svg class="abs" style="left:1110px;top:0" width="256" height="40" viewBox="0 0 256 40">
<path d="M11.300 23l5.800-5.800 5.800 5.800" fill="none" stroke="#fff" stroke-width="1.300"/>
<!-- battery with plug -->
<rect x="37.700" y="16.800" width="10" height="7.700" fill="none" stroke="#fff" stroke-width="1.100"/><path d="M39.800 18.200h7v4.900h-8.200z" fill="#fff"/><rect x="48.200" y="18.900" width="1" height="3.300" fill="#fff"/>
<path d="M34.300 14.100v3M36.600 14.100v3" stroke="#fff" stroke-width=".9"/><path d="M33.300 17.300h4.300v1.300q0 1.800-2.150 1.800t-2.150-1.800z" fill="none" stroke="#fff" stroke-width=".9"/><path d="M35.450 20.400v4.300h2.300" fill="none" stroke="#fff" stroke-width=".9"/>
<!-- volume -->
<path d="M57.700 18.300h2.300l2.900-3.500v11.400l-2.900-3.500h-2.300z" fill="none" stroke="#fff" stroke-width="1"/>
<path d="M65.200 17.900q1.500 2.300 0 4.600" fill="none" stroke="#fff" stroke-width="1"/><path d="M67.600 15.900q2.900 4.300 0 8.600" fill="none" stroke="#fff" stroke-width="1" opacity=".7"/><path d="M70.200 13.700q4.200 6.500 0 13" fill="none" stroke="#fff" stroke-width="1" opacity=".4"/>
<!-- wifi -->
<g transform="translate(95.800 26.300)" fill="none" stroke="#fff" stroke-width="1.200"><circle cx="-1.100" cy="-.9" r="1.500" fill="#fff" stroke="none"/><path d="M-4.300 0A4.300 4.300 0 0 1 0 -4.300"/><path d="M-7.600 0A7.600 7.600 0 0 1 0 -7.600"/><path d="M-11 0A11 11 0 0 1 0 -11" opacity=".95"/></g>
<path d="M84 26.700l12-12.500v12.500z" fill="#03090f" opacity="0"/>
<!-- notification -->
<path d="M215.600 13.100h15.500v11h-5.200l-2.600 2.700-2.600-2.700h-5.100z" fill="none" stroke="#fff" stroke-width="1.200"/>
<rect x="251" y="0" width="1" height="40" fill="#5a5f66"/>
</svg>
<div class="t" style="left:1218.2px;top:12px;font-size:11.5px;letter-spacing:-1px;line-height:16px">CES</div>
<div class="t" style="left:1266px;top:3px;letter-spacing:-.8px;line-height:16px">13:00</div>
<div class="t" style="left:1251.9px;top:21px;letter-spacing:-.5px;line-height:16px">20.11.2017</div>
</div>
</body>
</html>
